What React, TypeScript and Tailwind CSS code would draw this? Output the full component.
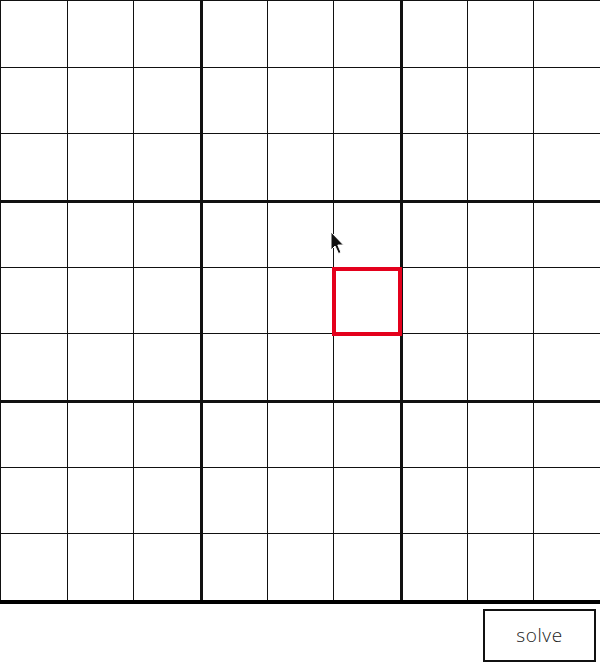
import React from "react";

export default function App() {
  const rows = Array.from({ length: 9 }, (_, r) => r);
  const cols = Array.from({ length: 9 }, (_, c) => c);
  return (
    <div className="relative w-[600px] h-[668px] overflow-hidden bg-white" style={{ fontFamily: '"Open Sans", "Noto Sans", sans-serif' }}>
      <div className="w-[603px] grid grid-cols-[repeat(9,66.6667px)] grid-rows-[repeat(9,66.6667px)] border-b-4 border-black">
        {rows.map((r) =>
          cols.map((c) => {
            const thickL = c === 3 || c === 6;
            const thickT = r === 3 || r === 6;
            return (
              <div
                key={`${r}-${c}`}
                className={
                  "relative box-border border-[#111] " +
                  (thickL ? "border-l-[3px] " : "border-l ") +
                  (thickT ? "border-t-[3px]" : "border-t")
                }
              >
                {r === 4 && c === 5 && (
                  <div className="absolute left-[-2px] top-[-1px] w-[70px] h-[69px] border-4 border-[#e4001c] z-10" />
                )}
              </div>
            );
          })
        )}
      </div>
      <div className="flex justify-end pr-[4px] mt-[5px]">
        <button className="w-[113px] h-[53px] border-2 border-[#111] bg-white text-[19px] text-[#222] font-light tracking-[0.6px]">
          solve
        </button>
      </div>
      <svg className="absolute left-[330px] top-[231px] z-20" width="15" height="24" viewBox="0 0 15 24">
        <path d="M1 1 L1 19 L5 15 L8.5 22.5 L11 21.5 L7.8 14 L13.5 14 Z" fill="#111" stroke="#fff" strokeWidth="1" strokeLinejoin="round" />
      </svg>
    </div>
  );
}
